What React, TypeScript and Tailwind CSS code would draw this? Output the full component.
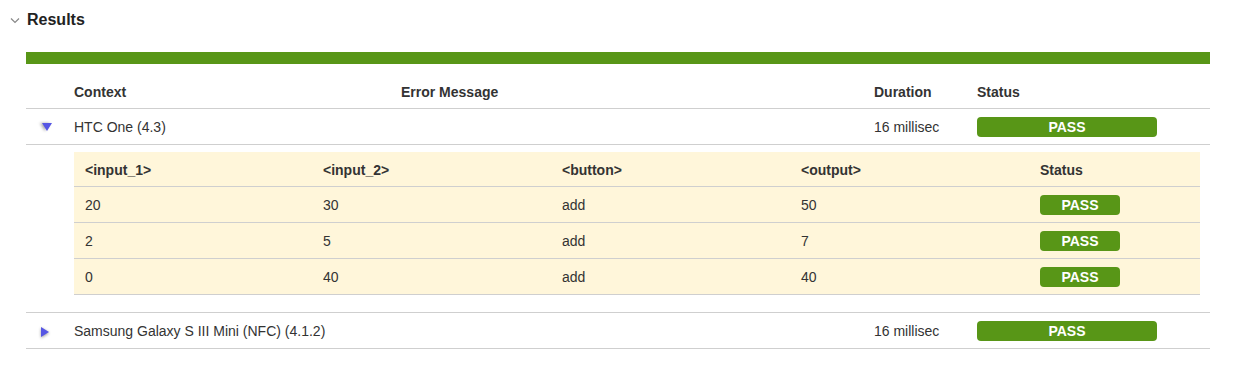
import React from 'react';

type Step = { input1: string; input2: string; button: string; output: string };

const htcSteps: Step[] = [
  { input1: '20', input2: '30', button: 'add', output: '50' },
  { input1: '2', input2: '5', button: 'add', output: '7' },
  { input1: '0', input2: '40', button: 'add', output: '40' },
];

const mainCols = 'grid grid-cols-[48px_327px_473px_103px_1fr] items-center';
const stepCols = 'grid grid-cols-[249px_239px_239px_239px_1fr] items-center';

// Little blue disclosure triangle, pointing down when the row is open
const Disclosure: React.FC<{ open: boolean }> = ({ open }) => (
  <svg
    width="12"
    height="12"
    viewBox="0 0 12 12"
    className={open ? 'ml-[15px] drop-shadow-[-2px_0px_1.5px_rgba(0,0,0,0.35)]' : 'ml-[13px] mt-[2px] drop-shadow-[0px_1px_1.5px_rgba(0,0,0,0.4)]'}
  >
    {open ? <polygon points="1,2 11,2 6,10" fill="#5656e4" /> : <polygon points="2,1 10,6 2,11" fill="#5656e4" />}
  </svg>
);

const PassBadge: React.FC<{ wide?: boolean }> = ({ wide }) => (
  <div
    className={`${wide ? 'w-[180px]' : 'w-[80px]'} h-[20px] rounded-[4px] bg-[#589617] text-white font-bold text-[14px] leading-[20px] text-center`}
  >
    PASS
  </div>
);

const StepsTable: React.FC<{ steps: Step[] }> = ({ steps }) => (
  <div className="bg-[#fff6da] text-[14px]">
    <div className={`${stepCols} h-[35px] pt-[2px] border-b border-[#cfcfcf] font-bold`}>
      <div className="pl-[11px]">&lt;input_1&gt;</div>
      <div>&lt;input_2&gt;</div>
      <div>&lt;button&gt;</div>
      <div>&lt;output&gt;</div>
      <div>Status</div>
    </div>
    {steps.map((s, i) => (
      <div key={i} className={`${stepCols} h-[36px] border-b border-[#cfcfcf]`}>
        <div className="pl-[11px] pt-[2px]">{s.input1}</div>
        <div className="pt-[2px]">{s.input2}</div>
        <div className="pt-[2px]">{s.button}</div>
        <div className="pt-[2px]">{s.output}</div>
        <div>
          <PassBadge />
        </div>
      </div>
    ))}
  </div>
);

export default function App() {
  return (
    <div className="w-[1233px] h-[367px] bg-white text-[#333] font-['Liberation_Sans',Arial,sans-serif]">
      <div className="flex items-center h-[38px]">
        <svg width="10" height="7" viewBox="0 0 10 7" className="ml-[10px] mt-[2px]">
          <polyline points="1,1.5 5,5.5 9,1.5" fill="none" stroke="#888" strokeWidth="1.2" />
        </svg>
        <h2 className="ml-[7px] mt-[2px] text-[16px] font-bold text-[#222]">Results</h2>
      </div>

      <div className="ml-[26px] mr-[23px] mt-[14px]">
        <div className="h-[12px] bg-[#589617]" />

        <div className={`${mainCols} mt-[9px] h-[36px] pt-[4px] border-b border-[#cfcfcf] text-[14px] font-bold`}>
          <div />
          <div>Context</div>
          <div>Error Message</div>
          <div>Duration</div>
          <div>Status</div>
        </div>

        <div className={`${mainCols} h-[36px] border-b border-[#cfcfcf] text-[14px]`}>
          <Disclosure open />
          <div className="pt-[2px]">HTC One (4.3)</div>
          <div />
          <div className="pt-[2px]">16 millisec</div>
          <div>
            <PassBadge wide />
          </div>
        </div>

        <div className="pl-[48px] pr-[10px] pt-[7px] pb-[17px] border-b border-[#cfcfcf]">
          <StepsTable steps={htcSteps} />
        </div>

        <div className={`${mainCols} h-[36px] border-b border-[#cfcfcf] text-[14px]`}>
          <Disclosure open={false} />
          <div className="pt-[2px]">Samsung Galaxy S III Mini (NFC) (4.1.2)</div>
          <div />
          <div className="pt-[2px]">16 millisec</div>
          <div>
            <PassBadge wide />
          </div>
        </div>
      </div>
    </div>
  );
}
